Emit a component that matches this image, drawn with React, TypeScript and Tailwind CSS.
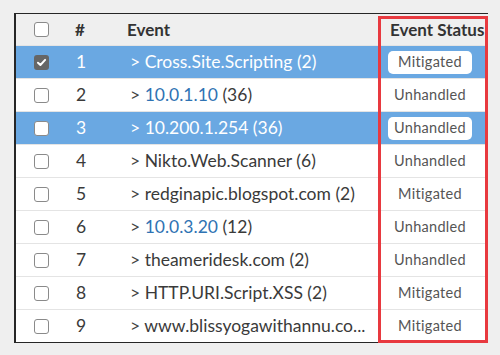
import React from "react";

type Row = {
  n: number;
  link?: string;
  text: string;
  status: "Mitigated" | "Unhandled";
  selected?: boolean;
  checked?: boolean;
};

const rows: Row[] = [
  { n: 1, text: "Cross.Site.Scripting (2)", status: "Mitigated", selected: true, checked: true },
  { n: 2, link: "10.0.1.10", text: " (36)", status: "Unhandled" },
  { n: 3, link: "10.200.1.254", text: " (36)", status: "Unhandled", selected: true },
  { n: 4, text: "Nikto.Web.Scanner (6)", status: "Unhandled" },
  { n: 5, text: "redginapic.blogspot.com (2)", status: "Mitigated" },
  { n: 6, link: "10.0.3.20", text: " (12)", status: "Unhandled" },
  { n: 7, text: "theameridesk.com (2)", status: "Unhandled" },
  { n: 8, text: "HTTP.URI.Script.XSS (2)", status: "Mitigated" },
  { n: 9, text: "www.blissyogawithannu.co...", status: "Mitigated" },
];

function Checkbox({ checked }: { checked?: boolean }) {
  if (checked) {
    return (
      <div className="w-[15px] h-[15px] rounded-[3px] bg-[#666666] flex items-center justify-center">
        <svg width="11" height="11" viewBox="0 0 10 10">
          <path d="M1.8 5.2 L4 7.3 L8.3 2.6" fill="none" stroke="#ffffff" strokeWidth="1.8" strokeLinecap="round" strokeLinejoin="round" />
        </svg>
      </div>
    );
  }
  return <div className="w-[15px] h-[15px] rounded-[3px] border-[1.5px] border-[#8a8a8a] bg-white" />;
}

export default function App() {
  return (
    <div
      className="w-[500px] h-[355px] bg-[#efefef] relative pl-[14px] pt-[13px] overflow-hidden"
      style={{ fontFamily: "Lato, 'Open Sans', sans-serif" }}
    >
      <div className="w-[474px] border-l-2 border-t border-b border-[#262626] overflow-hidden">
        <div className="grid grid-cols-[46px_64px_252px_112px] h-[31px] items-center bg-[#efefef] text-[17px] font-bold text-[#333333]">
          <div className="pl-[18px]">
            <div className="w-[15px] h-[15px] rounded-[3px] border-[1.5px] border-[#8a8a8a] bg-white" />
          </div>
          <div className="pl-[13px]">#</div>
          <div className="pl-[1px]">Event</div>
          <div className="pl-[12px] whitespace-nowrap">Event Status</div>
        </div>
        {rows.map((r) => (
          <div
            key={r.n}
            className={
              "grid grid-cols-[46px_64px_252px_112px] h-[33px] items-center text-[17.5px] border-t border-[#e4e4e4] " +
              (r.selected ? "bg-[#6aa8e2] text-white" : "bg-white text-[#3a3a3a]")
            }
          >
            <div className="pl-[18px]">
              <Checkbox checked={r.checked} />
            </div>
            <div className="pl-[14px]">{r.n}</div>
            <div className="pl-[4px] whitespace-nowrap">
              <span className={r.selected ? "" : "text-[#444444]"}>{"> "}</span>
              {r.link && <span className={r.selected ? "" : "text-[#2f73b3]"}>{r.link}</span>}
              <span>{r.text}</span>
            </div>
            <div className="flex justify-center pr-[8px]">
              <div
                className={
                  "h-[23px] w-[84px] flex items-center justify-center rounded-[5px] text-[14.5px] tracking-[0.3px] text-[#555555] " +
                  (r.selected ? "bg-white" : "")
                }
              >
                {r.status}
              </div>
            </div>
          </div>
        ))}
      </div>
      <div className="absolute left-[378px] top-[16px] w-[110px] h-[327px] border-[3px] border-[#e8393f]" />
    </div>
  );
}
